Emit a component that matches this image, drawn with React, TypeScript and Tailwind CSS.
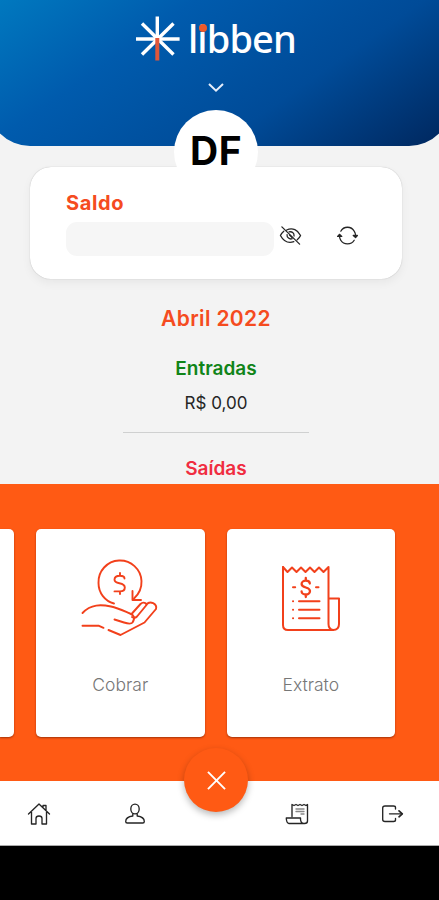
import type { ReactNode } from "react";

function Logo() {
  return (
    <div className="relative flex h-[46px] w-[162px] items-center">
      <svg className="h-[46px] w-[45px] shrink-0" viewBox="0 0 45 46" fill="none" strokeWidth="3.4">
        <g stroke="#fff">
          <path d="M22.3 1.5V22M1 24H44.6" />
          <path d="M7 8.5L38.5 39.5M38.5 8.5L7 39.5" />
        </g>
        <path d="M22.3 23V45.5" stroke="#e0563a" strokeWidth="4" />
      </svg>
      <span className="ml-[8px] font-['Noto_Sans'] text-[38px] leading-[46px] font-medium tracking-[-0.9px] text-white">
        libben
      </span>
      <span className="absolute top-[9px] left-[64px] h-[8px] w-[8px] rounded-full bg-[#ee5a2a]" />
    </div>
  );
}

function HandCoinIcon() {
  return (
    <svg
      className="h-[78px] w-[78px]"
      viewBox="0 0 78 78"
      fill="none"
      stroke="#f2401b"
      strokeWidth="1.9"
      strokeLinecap="round"
      strokeLinejoin="round"
    >
      <path d="M33 44.5C24 42 17.5 34 17.5 24A21.5 21.5 0 0 1 60.5 22C60.8 29 58 35 53 39.5" />
      <path d="M51.5 32V41H60" />
      <path d="M43.5 19.5C43.5 17.5 41.5 16.8 39 16.8C35.5 16.8 33.5 18.5 33.5 20.8C33.5 26 43.8 22.5 43.8 28.5C43.8 31 41.5 32.4 38.8 32.4H33.5M39 14V16.8M39 32.4V35" />
      <path d="M1.5 54C10 45 20 45.5 30 47.5C37 49 43 52 49 54.5C53 56 54.5 59 51.5 63.5C50 65.5 46 64.5 43 63.5L33.5 60.5" />
      <path d="M51 54.5L59.5 45C62 42.5 66 44 65.5 46L56 57.5C54.5 59 52.5 59 51 58" />
      <path d="M65.5 45.5C69 41 76.5 45 75 50L63.5 63.5L39.5 76L27.5 71" />
      <path d="M1.5 66.8H18L22.5 68.8" />
    </svg>
  );
}

function ReceiptIcon() {
  return (
    <svg
      className="h-[68px] w-[60px]"
      viewBox="0 0 60 68"
      fill="none"
      stroke="#f2401b"
      strokeWidth="2"
      strokeLinecap="round"
      strokeLinejoin="round"
    >
      <path d="M2 3V61Q2 66 7 66H52Q58 66 58 60V34.5H48" />
      <path d="M2 3L6.5 8L11 3.5L15.5 8L20 3.5L24.5 8L29 3.5L33.5 8L38 3.5L42.5 8L47.5 3V60Q47.5 65 52 66" />
      <path d="M28.8 19.5C28.8 17.5 27 16.6 24.8 16.6C22.5 16.6 20.6 18 20.6 20C20.6 24.5 29 22.5 29 27C29 29.2 27 30.5 24.8 30.5C22.5 30.5 20.6 29.2 20.6 27.5M24.8 14V16.5M24.8 30.5V33" strokeWidth="2.3" />
      <path d="M12 23.3H14.2M35 23.3H37.5M18 37.3H38.5M18 45.8H38.5M18 54.3H38.5M12 37.3H12.1M12 45.8H12.1M12 54.3H12.1" />
    </svg>
  );
}

function LineIcon({ children, className = "h-6 w-6" }: { children: ReactNode; className?: string }) {
  return (
    <svg
      className={className}
      viewBox="0 0 24 24"
      fill="none"
      stroke="#252525"
      strokeWidth="1.35"
      strokeLinecap="round"
      strokeLinejoin="round"
    >
      {children}
    </svg>
  );
}

function ActionCard({ icon, label }: { icon: ReactNode; label: string }) {
  return (
    <div className="flex h-[208px] w-[168.5px] shrink-0 flex-col items-center rounded-[5px] bg-white pt-[30px] shadow-[0_1px_2px_rgba(90,20,0,0.55)]">
      <div className="flex h-[78px] items-center">{icon}</div>
      <span className="mt-[36px] text-[17.5px] leading-6 font-light text-[#777]">{label}</span>
    </div>
  );
}

export default function App() {
  return (
    <main className="flex h-[900px] w-[439px] flex-col overflow-hidden bg-[#f3f3f3] font-['Inter',sans-serif]">
      <header className="-mx-[12px] flex h-[146px] shrink-0 flex-col items-center rounded-b-[42px] bg-[linear-gradient(145deg,#007ac0_0%,#005bad_31%,#004b98_65%,#00265c_100%)] pt-[15px] pr-[7px]">
        <Logo />
        <svg className="mt-[20px] h-[13px] w-[18px]" viewBox="0 0 18 13" fill="none" stroke="#e5eefb" strokeWidth="2">
          <path d="M2 3L9 9.7L16 3" />
        </svg>
      </header>

      <section className="relative mt-[21px] ml-[30px] h-[112px] w-[372px] shrink-0 rounded-[21px] bg-white px-[36px] pt-[24px] shadow-[0_0_1px_rgba(0,0,0,0.3),0_4px_10px_rgba(0,0,0,0.05)]">
        <div className="absolute top-[-57px] left-[144px] flex h-[84px] w-[84px] justify-center rounded-full bg-white pt-[18px] text-[39px] leading-[46px] font-bold tracking-[0.4px] text-black">
          DF
        </div>
        <h2 className="text-[20px] leading-6 font-bold tracking-[0.6px] text-[#f54b20]">Saldo</h2>
        <div className="mt-[7px] flex items-center">
          <div className="h-[34px] w-[208px] rounded-[11px] bg-[#f6f6f6]" />
          <LineIcon className="mb-[8px] ml-[5px] h-[23px] w-[23px]">
            <path d="M3 3L21.5 21M8 6.3C14 3 20 6.5 22.5 12C21.7 13.8 20.5 15.3 19 16.5M15.5 18.5C9.5 20.5 4.5 17.5 1.5 12C2.3 10 3.5 8.7 5 7.5" />
            <path d="M10.5 8.3C13.5 7.5 16 9.5 15.7 12.5M13.8 15.3C11 16.5 8 14 8.4 11M11 11.5L13.4 13.8" />
          </LineIcon>
          <LineIcon className="mb-[8px] ml-[34px] h-[23px] w-[23px]">
            <path d="M5 7.5C8 2 16 2 19 7.5C20 9 20.4 10.5 20.4 12.5M19 17C16 22 8 22 5 17C4 15.5 3.6 14 3.6 12" />
            <path d="M1.7 13L3.6 10.8L6 13ZM18 12L20.4 14.2L22.3 12Z" fill="#252525" />
          </LineIcon>
        </div>
      </section>

      <section className="flex h-[205px] shrink-0 flex-col items-center overflow-hidden pt-[27px] pr-[7px]">
        <h2 className="text-[21px] leading-[26px] font-semibold tracking-[0.35px] text-[#f54b20]">Abril 2022</h2>
        <h3 className="mt-[25px] text-[19px] leading-6 font-semibold text-[#108418]">Entradas</h3>
        <p className="mt-[10px] text-[17px] leading-6 text-[#252525]">R$ 0,00</p>
        <div className="mt-[17px] h-px w-[186px] shrink-0 bg-[#cfd0d0]" />
        <h3 className="mt-[24px] text-[19px] leading-6 font-semibold text-[#f02c40]">Saídas</h3>
      </section>

      <section className="flex h-[297px] shrink-0 gap-[22px] bg-[#ff5a14] pt-[45px]">
        <div className="h-[208px] w-[14px] shrink-0 rounded-r-[5px] bg-white shadow-[0_1px_2px_rgba(90,20,0,0.55)]" />
        <ActionCard icon={<HandCoinIcon />} label="Cobrar" />
        <ActionCard icon={<ReceiptIcon />} label="Extrato" />
      </section>

      <nav className="relative flex h-[65px] shrink-0 items-center border-b border-[#aaa] bg-white pt-px pl-[27px]">
        <LineIcon>
          <path d="M1.5 12L12 2L22.5 12M4.5 10V22H9V16.5Q9 14 12 14Q15 14 15 16.5V22H19.5V10M16 5V3.5H19V8" />
        </LineIcon>
        <LineIcon className="ml-[72px] h-6 w-6">
          <ellipse cx="12" cy="7" rx="4.2" ry="4.9" />
          <path d="M9.8 11.8V14C6 14.5 2.7 16.5 2.7 19.5Q2.7 21 4.2 21H19.8Q21.3 21 21.3 19.5C21.3 16.5 18 14.5 14.2 14V11.8" />
        </LineIcon>
        <LineIcon className="ml-[138px] h-6 w-6">
          <path d="M7 14.5V2.5L9 3.5L11 2.5L13 3.5L15 2.5L17 3.5L19 2.5L21 3.5L22.5 2.5V19Q22.5 21.5 19.5 21.5H4Q1.3 21 1.3 16H15.5C15.3 19 16.2 21.5 19 21.5" />
          <path d="M11 7H19M11 9.5H19M16 12H19" stroke="#888" />
        </LineIcon>
        <LineIcon className="ml-[72px] h-6 w-6">
          <path d="M14.5 7V5.5Q14.5 4 12.5 4H4Q1.7 4 1.7 6V17.5Q1.7 19.5 4 19.5H12.5Q14.5 19.5 14.5 18V16.5M8.5 11.8H21" />
          <path d="M18 8.8L21.3 11.8L18 14.8" strokeWidth="1.7" />
        </LineIcon>
        <button
          aria-label="Fechar"
          className="absolute top-[-33px] left-[184px] flex h-[64px] w-[64px] items-center justify-center rounded-full bg-[#ff5a14] shadow-[0_3px_7px_rgba(0,0,0,0.28)]"
        >
          <svg className="h-[19px] w-[19px]" viewBox="0 0 20 20" stroke="#fff" strokeWidth="2">
            <path d="M1 1L19 19M19 1L1 19" />
          </svg>
        </button>
      </nav>

      <div className="flex-1 bg-black" />
    </main>
  );
}
